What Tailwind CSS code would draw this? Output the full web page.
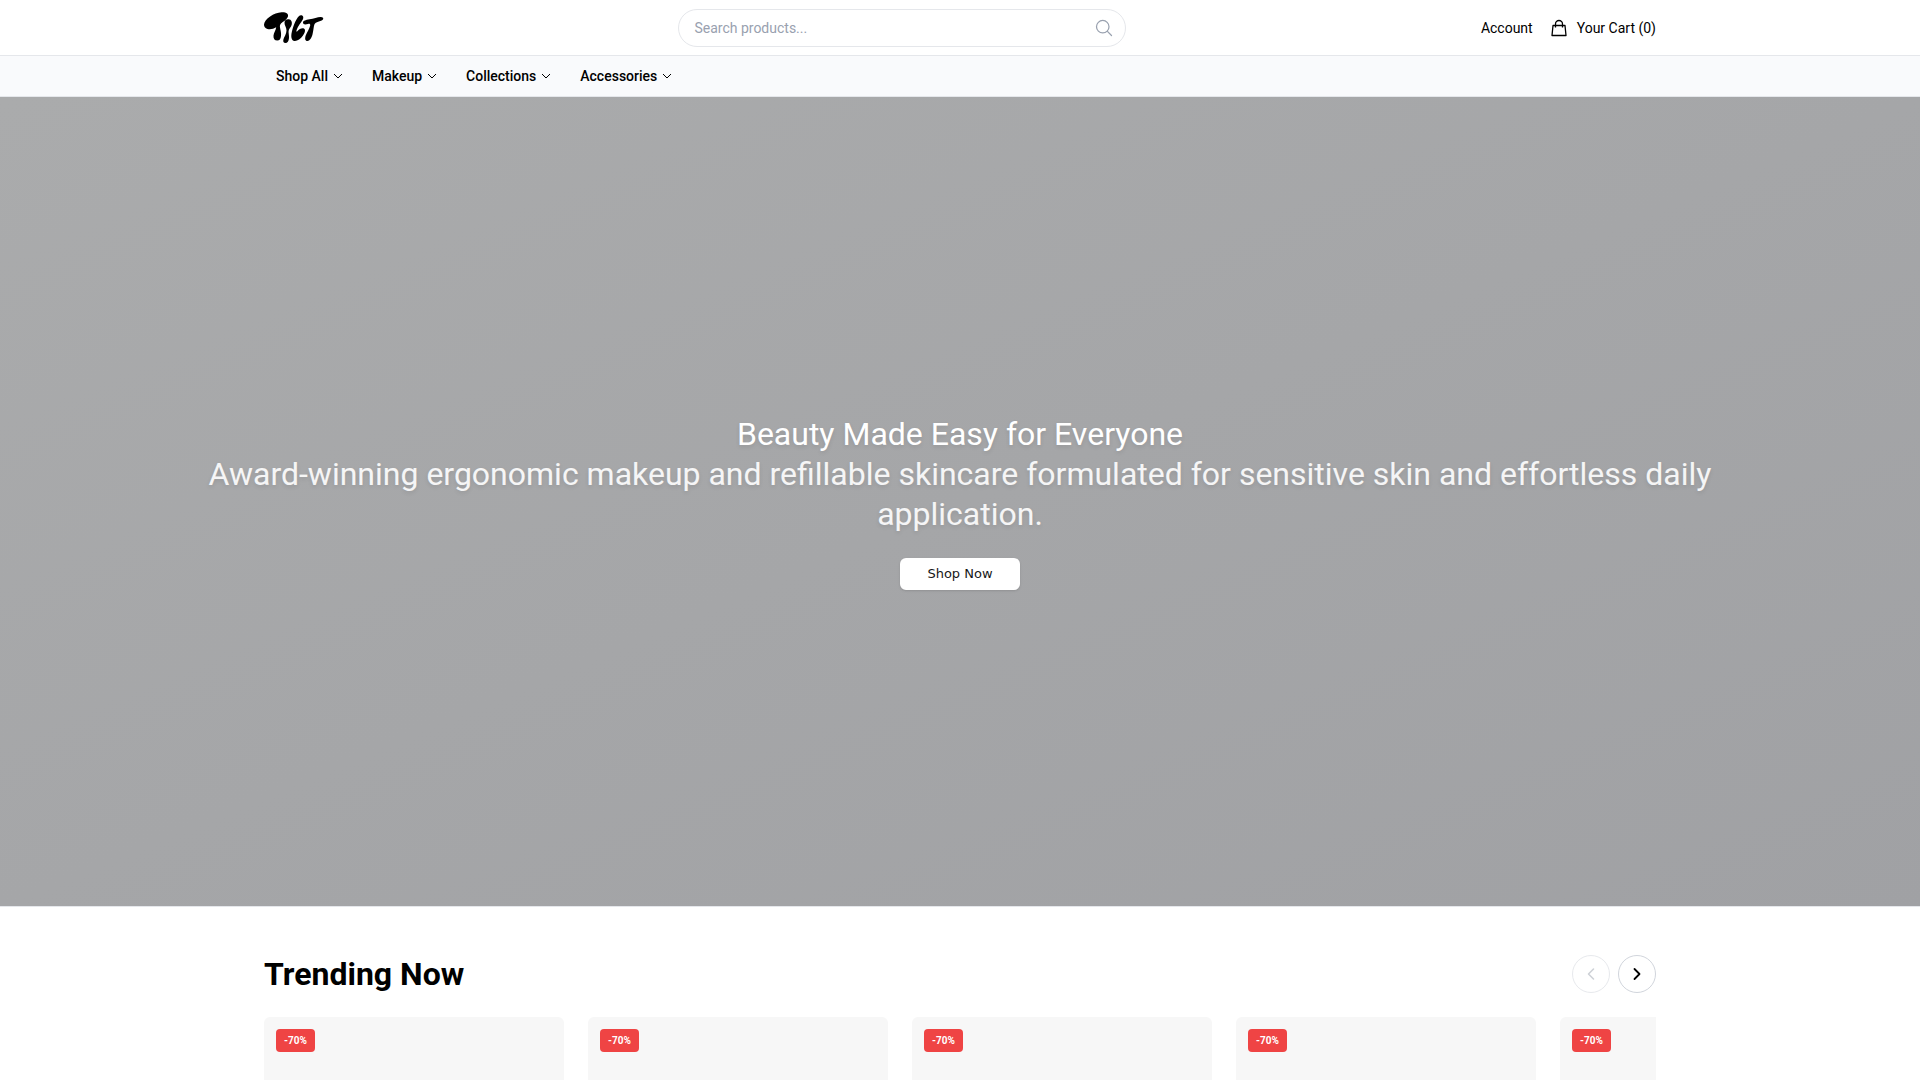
<!DOCTYPE html>
<html lang="en">
<head>
<meta charset="utf-8">
<meta name="viewport" content="width=device-width, initial-scale=1">
<title>TILT Beauty</title>
<script src="https://cdn.jsdelivr.net/npm/@tailwindcss/browser@4"></script>
</head>
<body class="bg-white text-black font-['Roboto',sans-serif] overflow-x-hidden">
<header class="border-b border-gray-200 bg-white">
  <div class="mx-auto flex max-w-[1440px] items-center justify-between px-6 pt-[9px] pb-2">
    <a href="#" aria-label="TILT home" class="block">
      <svg class="h-8 w-[60px]" viewBox="0 0 60 32" fill="#000">
        <path d="M0 12.500C0.500 7 10 0.500 17.500 0.200C22.500 0 25 2 23.800 5C22.500 8 19 9.500 17 11.500C15.500 13 15.800 14.500 16.300 17C16.800 19.500 17.300 21.500 17 24C16.700 27 15.500 28.600 13.300 28.600C10.500 28.600 9.200 26.500 9.500 23.500C9.800 20.500 11.800 18.500 12.200 15.200C9.500 17 6 17.600 3.500 16.900C1 16.200 0 14.500 0 12.500Z"/>
        <path d="M20.500 10.500C20.700 8 22.500 7 24.800 7.300C27.300 7.700 28.200 9.800 27.800 12.200C27.300 15 24.900 16.500 24.600 19C24.400 21 25.200 23.500 25 26C24.700 29.500 23.500 31 21.500 31C19.500 31 18.900 29.500 19.400 27.500C20 25 22.500 22 22.500 18.500C22.500 15.500 20.300 13 20.500 10.500Z"/>
        <path d="M36.800 3.200C39 3.200 40 5 38.800 7.500C37 11 33.800 14 32.600 18C32.200 19.700 32.600 20 33.300 19.300C35.200 17 38 15.700 39.900 16.500C41.700 17.400 41.200 20.500 39 23.500C36.600 26.900 33 29.300 30.400 28.900C27.700 28.500 26.900 25.500 27.500 21.500C28.600 15 33 3.500 36.800 3.200Z"/>
        <path d="M39 10.600C39 8.800 41.500 8 45.500 7.300C50 6.500 54 4.800 57 5C59.700 5.200 60 7.300 57.700 8.400C55 9.700 51.800 9.800 50.600 12C49.500 14.500 49.600 18 48.600 22C47.700 26 45.500 29 43.500 29C41 29 40.700 26.500 41.700 23.500C42.700 20.500 45.500 17 46.200 13.500C46.400 12 45.500 11.600 44 12C41.500 12.700 39 12.800 39 10.600Z"/>
      </svg>
    </a>
    <form class="relative mx-6 w-full max-w-md" role="search">
      <input type="search" aria-label="Search products" placeholder="Search products..." class="block h-[38px] w-full rounded-full border border-gray-200 pr-12 pl-[15px] text-sm outline-none placeholder:text-gray-400">
      <button type="button" aria-label="Search" class="absolute top-[9px] right-3 text-gray-400">
        <svg class="size-5" viewBox="0 0 24 24" fill="none" stroke="currentColor" stroke-width="1.500" stroke-linecap="round" stroke-linejoin="round"><path d="m21 21-5.197-5.197m0 0A7.500 7.500 0 1 0 5.196 5.196a7.500 7.500 0 0 0 10.607 10.607Z"/></svg>
      </button>
    </form>
    <div class="flex shrink-0 items-center gap-4 text-sm">
      <a href="#">Account</a>
      <a href="#" class="flex items-center gap-2">
        <svg class="size-5" viewBox="0 0 20 20" fill="none" stroke="currentColor" stroke-width="1.300" stroke-linejoin="round"><path d="M4 7.500h12l1 10H3zM6.500 9.500V6a3.500 3.500 0 0 1 7 0v3.500"/></svg>
        Your Cart (0)
      </a>
    </div>
  </div>
</header>
<nav class="border-b border-gray-200 bg-[#f9fafc]">
  <div class="mx-auto flex h-10 max-w-[1440px] items-center gap-1 px-6 text-sm font-medium">
    <button class="flex items-center gap-1 px-3">Shop All <svg class="size-3" viewBox="0 0 12 12" fill="none" stroke="currentColor"><path d="M2 4l4 4 4-4"/></svg></button>
    <button class="flex items-center gap-1 px-3">Makeup <svg class="size-3" viewBox="0 0 12 12" fill="none" stroke="currentColor"><path d="M2 4l4 4 4-4"/></svg></button>
    <button class="flex items-center gap-1 px-3">Collections <svg class="size-3" viewBox="0 0 12 12" fill="none" stroke="currentColor"><path d="M2 4l4 4 4-4"/></svg></button>
    <button class="flex items-center gap-1 px-3">Accessories <svg class="size-3" viewBox="0 0 12 12" fill="none" stroke="currentColor"><path d="M2 4l4 4 4-4"/></svg></button>
  </div>
</nav>
<main>
  <section class="flex h-[75vh] flex-col items-center justify-center border-b border-gray-200 bg-linear-to-br from-[#aaabac] to-[#a0a1a4] px-48 text-center">
    <h1 class="text-[32px] leading-10 text-white [text-shadow:0_2px_4px_rgba(0,0,0,0.1)]">Beauty Made Easy for Everyone</h1>
    <p class="text-[32px] leading-10 text-white/90 [text-shadow:0_2px_4px_rgba(0,0,0,0.1)]">Award-winning ergonomic makeup and refillable skincare formulated for sensitive skin and effortless daily application.</p>
    <button class="mt-6 h-8 w-30 rounded-md bg-white font-['DejaVu_Sans',sans-serif] text-[13px] text-neutral-900 shadow-sm">Shop Now</button>
  </section>
  <section class="mx-auto max-w-[1440px] px-6 py-12">
    <div class="mb-6 flex items-center justify-between">
      <h2 class="text-[32px] leading-[38px] font-bold">Trending Now</h2>
      <div class="flex gap-2">
        <button disabled aria-label="Previous" class="flex size-[38px] items-center justify-center rounded-full border border-gray-300 opacity-50"><svg class="size-5" viewBox="0 0 20 20" fill="none" stroke="#9ca3af" stroke-width="1.500" stroke-linecap="round" stroke-linejoin="round"><path d="M12.500 5l-5 5 5 5"/></svg></button>
        <button aria-label="Next" class="flex size-[38px] items-center justify-center rounded-full border border-gray-300"><svg class="size-5" viewBox="0 0 20 20" fill="none" stroke="currentColor" stroke-width="1.800" stroke-linecap="round" stroke-linejoin="round"><path d="M7.500 5l5 5-5 5"/></svg></button>
      </div>
    </div>
    <div class="flex gap-6 overflow-hidden">
      <article class="flex h-[300px] w-[300px] shrink-0 items-start rounded-md bg-[#f7f7f7] p-3"><span class="rounded-sm bg-[#ef4444] px-2 text-[10px] leading-[23px] font-bold text-white">-70%</span></article>
      <article class="flex h-[300px] w-[300px] shrink-0 items-start rounded-md bg-[#f7f7f7] p-3"><span class="rounded-sm bg-[#ef4444] px-2 text-[10px] leading-[23px] font-bold text-white">-70%</span></article>
      <article class="flex h-[300px] w-[300px] shrink-0 items-start rounded-md bg-[#f7f7f7] p-3"><span class="rounded-sm bg-[#ef4444] px-2 text-[10px] leading-[23px] font-bold text-white">-70%</span></article>
      <article class="flex h-[300px] w-[300px] shrink-0 items-start rounded-md bg-[#f7f7f7] p-3"><span class="rounded-sm bg-[#ef4444] px-2 text-[10px] leading-[23px] font-bold text-white">-70%</span></article>
      <article class="flex h-[300px] w-[300px] shrink-0 items-start rounded-md bg-[#f7f7f7] p-3"><span class="rounded-sm bg-[#ef4444] px-2 text-[10px] leading-[23px] font-bold text-white">-70%</span></article>
    </div>
  </section>
</main>
</body>
</html>
